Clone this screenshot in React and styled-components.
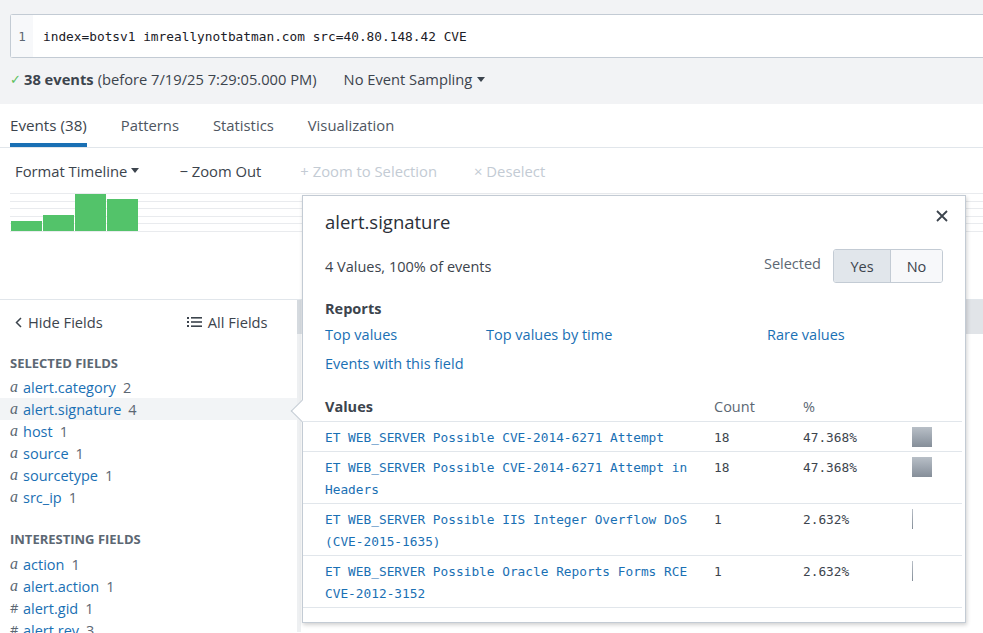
import React from 'react'
import styled, { createGlobalStyle } from 'styled-components'

const GlobalStyle = createGlobalStyle`
  html, body {
    margin: 0;
    padding: 0;
    background: #ffffff;
    font-family: "Open Sans", "Liberation Sans", sans-serif;
    color: #3c444d;
    overflow: hidden;
  }
  * { box-sizing: border-box; }
`

const Page = styled.div`
  position: relative;
  width: 983px;
  height: 633px;
  overflow: hidden;
`

const TopBand = styled.div`
  background: #f2f3f5;
  height: 104px;
  padding: 14px 0 0 10px;
`

const SearchBox = styled.div`
  display: flex;
  height: 44px;
  background: #fff;
  border: 1px solid #c3cbd4;
  border-right: none;
  border-radius: 3px 0 0 3px;
`

const Gutter = styled.div`
  width: 22px;
  background: #f7f8fa;
  color: #5c6773;
  font-family: "DejaVu Sans Mono", monospace;
  font-size: 12.5px;
  display: flex;
  align-items: center;
  justify-content: center;
`

const Query = styled.div`
  padding-left: 10px;
  display: flex;
  align-items: center;
  font-family: "DejaVu Sans Mono", monospace;
  font-size: 12.8px;
  color: #1b2027;
`

const StatusRow = styled.div`
  display: flex;
  align-items: center;
  margin-top: 11px;
  font-size: 14.7px;
  height: 20px;
`

const Check = styled.span`
  color: #5cc05c;
  font-size: 13px;
  margin-right: 3px;
`

const Bold = styled.b`
  font-weight: 700;
  margin-right: 4px;
`

const Sampling = styled.span`
  margin-left: 27px;
  display: flex;
  align-items: center;
  gap: 5px;
`

const Caret = styled.span`
  width: 0;
  height: 0;
  border-left: 4px solid transparent;
  border-right: 4px solid transparent;
  border-top: 5px solid #3c444d;
`

const Tabs = styled.div`
  display: flex;
  height: 44px;
  padding-left: 10px;
  border-bottom: 1px solid #e1e6eb;
  gap: 34px;
`

const Tab = styled.div`
  display: flex;
  align-items: center;
  font-size: ${p => (p.$active ? 15.2 : 14.8)}px;
  color: ${p => (p.$active ? '#3c444d' : '#4e5661')};
  border-bottom: 4px solid ${p => (p.$active ? '#1a70b4' : 'transparent')};
  padding-top: 2px;
`

const Toolbar = styled.div`
  display: flex;
  align-items: center;
  height: 45px;
  padding-left: 15px;
  font-size: 14.8px;
`

const ToolItem = styled.span`
  display: flex;
  align-items: center;
  gap: 4px;
  color: ${p => (p.$disabled ? '#c3cbd4' : '#3c444d')};
  margin-right: ${p => p.$gap}px;
`

const Chart = styled.div`
  position: relative;
  height: 106px;
  padding: 0 0 0 10px;
`

const Grid = styled.div`
  display: flex;
  flex-direction: column;
  height: 39px;
  justify-content: space-between;
`

const GridLine = styled.div`
  height: 1px;
  background: #e9ebee;
`

const Bars = styled.div`
  position: absolute;
  left: 11px;
  top: 0;
  height: 38px;
  display: flex;
  align-items: flex-end;
  gap: 1px;
`

const Bar = styled.div`
  width: 31px;
  background: #53c36a;
`

const Lower = styled.div`
  display: flex;
  height: 333px;
  border-top: 1px solid #e1e6eb;
`

const Sidebar = styled.div`
  width: 297px;
  flex: none;
`

const SideHead = styled.div`
  display: flex;
  align-items: center;
  height: 44px;
  padding: 0 0 0 15px;
  font-size: 14.7px;
  color: #3c444d;
`

const SideLink = styled.span`
  display: flex;
  align-items: center;
  gap: 6px;
  margin-right: ${p => p.$gap || 0}px;
`

const Section = styled.div`
  font-size: 13px;
  font-weight: 700;
  color: #5c6773;
  padding-left: 10px;
  height: 22px;
  display: flex;
  align-items: center;
  margin-top: ${p => p.$top}px;
  margin-bottom: ${p => p.$bottom}px;
`

const FieldRow = styled.div`
  display: flex;
  align-items: center;
  height: 22px;
  padding-left: 10px;
  font-size: 14.5px;
  background: ${p => (p.$active ? '#f2f4f6' : 'transparent')};
`

const Type = styled.span`
  font-style: ${p => (p.$num ? 'normal' : 'italic')};
  font-family: ${p => (p.$num ? '"Open Sans", sans-serif' : '"Liberation Serif", serif')};
  color: #5c6773;
  width: 13px;
  font-size: ${p => (p.$num ? '13px' : '16px')};
`

const FieldName = styled.span`
  color: #1a70b4;
  margin-right: 7px;
`

const FieldCount = styled.span`
  color: #5c6773;
`

const ScrollTrack = styled.div`
  width: 4px;
  flex: none;
  background: #eef0f2;
  display: flex;
  flex-direction: column;
`

const ScrollThumb = styled.div`
  height: 34px;
  background: #d5dadf;
`

const Main = styled.div`
  flex: 1;
`

const EventsHead = styled.div`
  height: 34px;
  background: #e1e4e8;
`

const Popover = styled.div`
  position: absolute;
  left: 302px;
  top: 195px;
  width: 664px;
  height: 428px;
  background: #fff;
  border: 1px solid #c3cbd4;
  box-shadow: 1px 2px 4px rgba(0, 0, 0, 0.18);
  padding: 0 0 0 22px;
`

const Pointer = styled.div`
  position: absolute;
  left: -9px;
  top: 207px;
  width: 16px;
  height: 16px;
  background: #fff;
  border-left: 1px solid #c3cbd4;
  border-bottom: 1px solid #c3cbd4;
  transform: rotate(45deg);
`

const PopTitle = styled.div`
  font-size: 18.5px;
  height: 24px;
  margin-top: 13px;
  display: flex;
  align-items: center;
  color: #2b3038;
`

const Close = styled.div`
  position: absolute;
  right: 17px;
  top: 9px;
  color: #3c444d;
`

const InfoRow = styled.div`
  display: flex;
  align-items: center;
  justify-content: space-between;
  margin-top: 16px;
  padding-right: 22px;
  height: 34px;
  font-size: 14.5px;
`

const SelectGroup = styled.div`
  display: flex;
  align-items: center;
`

const SelectedLabel = styled.span`
  color: #5c6773;
  margin-right: 12px;
  margin-top: -6px;
`

const Toggle = styled.div`
  display: flex;
  border: 1px solid #c3cbd4;
  border-radius: 3px;
  height: 34px;
  overflow: hidden;
`

const ToggleBtn = styled.div`
  width: ${p => p.$w}px;
  display: flex;
  align-items: center;
  justify-content: center;
  background: ${p => (p.$on ? '#e1e6eb' : '#f7f8fa')};
  border-left: ${p => (p.$on ? 'none' : '1px solid #c3cbd4')};
  color: #3c444d;
`

const Heading = styled.div`
  font-size: 14.5px;
  font-weight: 700;
  height: 20px;
  display: flex;
  align-items: center;
  margin-top: ${p => p.$top}px;
`

const LinkRow = styled.div`
  display: flex;
  height: 22px;
  align-items: center;
  margin-top: ${p => p.$top}px;
  font-size: 14.5px;
`

const ReportLink = styled.span`
  color: #1a70b4;
  width: ${p => (p.$w ? `${p.$w}px` : 'auto')};
  flex: none;
`

const Table = styled.div`
  margin-top: 18px;
  margin-left: -22px;
  margin-right: 3px;
`

const Row = styled.div`
  display: grid;
  grid-template-columns: 389px 89px 109px 1fr;
  padding: ${p => (p.$head ? '4px 0 3px 22px' : '5px 0 2px 22px')};
  border-bottom: 1px solid #e1e6eb;
  line-height: 22px;
`

const HeadCell = styled.div`
  font-size: 14.5px;
  height: 22px;
  font-weight: ${p => (p.$bold ? 700 : 400)};
  color: ${p => (p.$bold ? '#3c444d' : '#5c6773')};
`

const ValueCell = styled.div`
  font-family: "DejaVu Sans Mono", monospace;
  font-size: 12.8px;
  color: ${p => (p.$link ? '#1a70b4' : '#3c444d')};
  padding-right: 20px;
`

const PctBar = styled.div`
  width: ${p => p.$w}px;
  height: 20px;
  background: linear-gradient(#b8bfc7, #858e99);
`

const rows = [
  { v: 'ET WEB_SERVER Possible CVE-2014-6271 Attempt', c: 18, p: '47.368%', w: 20 },
  { v: 'ET WEB_SERVER Possible CVE-2014-6271 Attempt in Headers', c: 18, p: '47.368%', w: 20 },
  { v: 'ET WEB_SERVER Possible IIS Integer Overflow DoS (CVE-2015-1635)', c: 1, p: '2.632%', w: 1 },
  { v: 'ET WEB_SERVER Possible Oracle Reports Forms RCE CVE-2012-3152', c: 1, p: '2.632%', w: 1 },
]

const selected = [
  ['alert.category', 2],
  ['alert.signature', 4],
  ['host', 1],
  ['source', 1],
  ['sourcetype', 1],
  ['src_ip', 1],
]

const interesting = [
  ['action', 1, false],
  ['alert.action', 1, false],
  ['alert.gid', 1, true],
  ['alert.rev', 3, true],
]

const barHeights = [10, 16, 37, 32]

export default function App() {
  return (
    <Page>
      <GlobalStyle />
      <TopBand>
        <SearchBox>
          <Gutter>1</Gutter>
          <Query>index=botsv1 imreallynotbatman.com src=40.80.148.42 CVE</Query>
        </SearchBox>
        <StatusRow>
          <Check>✓</Check>
          <Bold>38 events</Bold>
          <span>(before 7/19/25 7:29:05.000 PM)</span>
          <Sampling>No Event Sampling <Caret /></Sampling>
        </StatusRow>
      </TopBand>

      <Tabs>
        <Tab $active>Events (38)</Tab>
        <Tab>Patterns</Tab>
        <Tab>Statistics</Tab>
        <Tab>Visualization</Tab>
      </Tabs>

      <Toolbar>
        <ToolItem $gap={40}>Format Timeline <Caret /></ToolItem>
        <ToolItem $gap={39}>− Zoom Out</ToolItem>
        <ToolItem $disabled $gap={37}>+ Zoom to Selection</ToolItem>
        <ToolItem $disabled>× Deselect</ToolItem>
      </Toolbar>

      <Chart>
        <Grid>
          {[0, 1, 2, 3, 4, 5].map(i => <GridLine key={i} />)}
        </Grid>
        <Bars>
          {barHeights.map((h, i) => <Bar key={i} style={{ height: h }} />)}
        </Bars>
      </Chart>

      <Lower>
        <Sidebar>
          <SideHead>
            <SideLink $gap={84}>
              <svg width="7" height="11" viewBox="0 0 7 11"><path d="M6 1 L1.5 5.5 L6 10" fill="none" stroke="#3c444d" strokeWidth="1.5" /></svg>
              Hide Fields
            </SideLink>
            <SideLink>
              <svg width="15" height="12" viewBox="0 0 15 12">
                <g fill="#3c444d">
                  <rect x="0" y="1" width="2" height="2" />
                  <rect x="0" y="5" width="2" height="2" />
                  <rect x="0" y="9" width="2" height="2" />
                  <rect x="4" y="1" width="11" height="1.6" />
                  <rect x="4" y="5.2" width="11" height="1.6" />
                  <rect x="4" y="9.4" width="11" height="1.6" />
                </g>
              </svg>
              All Fields
            </SideLink>
          </SideHead>
          <Section $top={8} $bottom={2}>SELECTED FIELDS</Section>
          {selected.map(([n, c]) => (
            <FieldRow key={n} $active={n === 'alert.signature'}>
              <Type>a</Type>
              <FieldName>{n}</FieldName>
              <FieldCount>{c}</FieldCount>
            </FieldRow>
          ))}
          <Section $top={20} $bottom={3}>INTERESTING FIELDS</Section>
          {interesting.map(([n, c, num]) => (
            <FieldRow key={n}>
              <Type $num={num}>{num ? '#' : 'a'}</Type>
              <FieldName>{n}</FieldName>
              <FieldCount>{c}</FieldCount>
            </FieldRow>
          ))}
        </Sidebar>
        <ScrollTrack>
          <ScrollThumb />
        </ScrollTrack>
        <Main>
          <EventsHead />
        </Main>
      </Lower>

      <Popover>
        <Pointer />
        <Close>
          <svg width="12" height="12" viewBox="0 0 12 12"><path d="M1 1 L11 11 M11 1 L1 11" stroke="#3c444d" strokeWidth="1.8" /></svg>
        </Close>
        <PopTitle>alert.signature</PopTitle>
        <InfoRow>
          <span>4 Values, 100% of events</span>
          <SelectGroup>
            <SelectedLabel>Selected</SelectedLabel>
            <Toggle>
              <ToggleBtn $on $w={56}>Yes</ToggleBtn>
              <ToggleBtn $w={52}>No</ToggleBtn>
            </Toggle>
          </SelectGroup>
        </InfoRow>
        <Heading $top={15}>Reports</Heading>
        <LinkRow $top={5}>
          <ReportLink $w={161}>Top values</ReportLink>
          <ReportLink $w={281}>Top values by time</ReportLink>
          <ReportLink>Rare values</ReportLink>
        </LinkRow>
        <LinkRow $top={7}>
          <ReportLink>Events with this field</ReportLink>
        </LinkRow>
        <Table>
          <Row $head>
            <HeadCell $bold>Values</HeadCell>
            <HeadCell>Count</HeadCell>
            <HeadCell>%</HeadCell>
            <div />
          </Row>
          {rows.map(r => (
            <Row key={r.v}>
              <ValueCell $link>{r.v}</ValueCell>
              <ValueCell>{r.c}</ValueCell>
              <ValueCell>{r.p}</ValueCell>
              <div><PctBar $w={r.w} /></div>
            </Row>
          ))}
        </Table>
      </Popover>
    </Page>
  )
}
